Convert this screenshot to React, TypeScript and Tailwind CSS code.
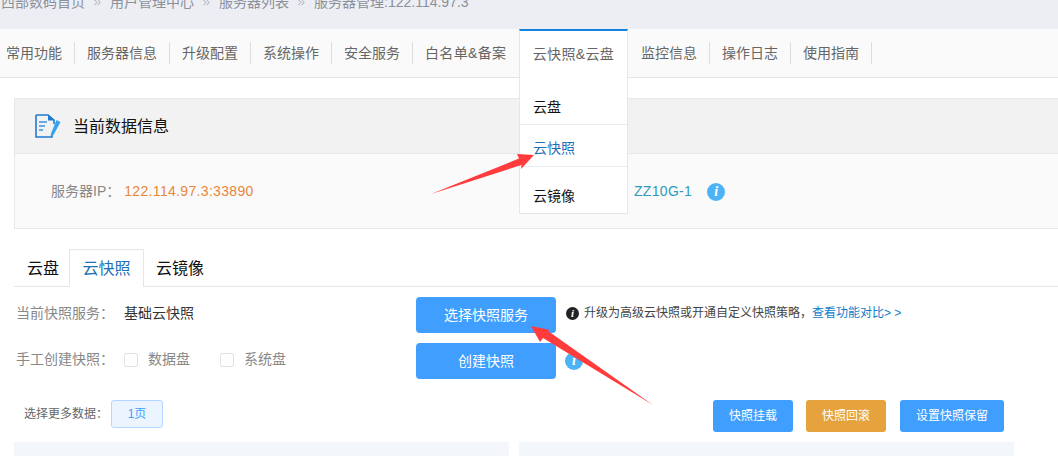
import React from 'react';
import { ChevronsRight } from 'lucide-react';

const font = "font-['Liberation_Sans','Noto_Sans_CJK_SC',sans-serif]";

const navItems = ['服务器信息', '升级配置', '系统操作', '安全服务'];
const navAfter = ['监控信息', '操作日志', '使用指南'];
const crumbs = ['用户管理中心', '服务器列表', '服务器管理:122.114.97.3'];

const InfoDot = ({ className }: { className: string }) => (
  <span className={`flex items-center justify-center rounded-full font-['Liberation_Serif',serif] font-bold italic leading-none ${className}`}>i</span>
);

const DocIcon = () => (
  <svg width="26" height="24" viewBox="0 0 26 24" fill="none">
    <path d="M1 1H13L19 6V10M17 21V23H1V1" stroke="#1f7ad0" strokeWidth="1.6" />
    <path d="M13 0.5L19.5 6.5H13Z" fill="#1f7ad0" />
    <path d="M4 8H12M4 12H10M4 16H8" stroke="#3f93dd" strokeWidth="1.6" />
    <path d="M21.5 6L25.5 8L18.5 21L15.5 23L16 19.5Z" fill="#35a3ee" />
  </svg>
);

const Checkbox = () => <span className="w-[14px] h-[14px] border border-[#dcdfe6] rounded-[2px] bg-white" />;

export default function App() {
  return (
    <div className={`relative w-[1058px] h-[456px] overflow-hidden bg-white text-[14px] ${font}`}>
      {/* breadcrumb, cut off by the top of the window */}
      <div className="h-[29px] bg-[#eceef4] overflow-hidden">
        <div className="flex items-center -mt-[8px] pl-[1px] h-[21px] text-[#8b9099]">
          <span>西部数码首页</span>
          {crumbs.map(c => (
            <React.Fragment key={c}>
              <ChevronsRight size={11} className="mx-[7px] text-[#9aa0aa]" />
              <span>{c}</span>
            </React.Fragment>
          ))}
        </div>
      </div>

      {/* nav */}
      <div className="flex h-[49px] bg-[#fafafa] border-b border-[#e6e6e6] text-[#666]">
        <div className="self-center h-[22px] leading-[22px] pl-[6px] pr-3 border-r border-[#ddd]">常用功能</div>
        {navItems.map(n => (
          <div key={n} className="self-center h-[22px] leading-[22px] px-3 border-r border-[#ddd]">{n}</div>
        ))}
        <div className="self-center h-[22px] leading-[22px] pl-3 w-[106px] tracking-[0.35px]">白名单&amp;备案</div>
        <div className="w-[109px] h-[49px] bg-white border-x border-[#e6e6e6] border-t-2 border-t-[#1581e0] flex items-center justify-center tracking-[0.35px]">云快照&amp;云盘</div>
        <div className="flex self-center ml-[1px]">
          {navAfter.map(n => (
            <div key={n} className="h-[22px] leading-[22px] px-3 border-r border-[#ddd]">{n}</div>
          ))}
        </div>
      </div>

      {/* current data panel */}
      <div className="ml-[14px] mt-[20px] border border-[#e8e8e8] border-r-0 bg-[#fafafa] h-[131px]">
        <div className="h-[55px] bg-[#f2f2f2] border-b border-[#e8e8e8] flex items-center pl-[20px] gap-[12px] text-[16px] text-[#111]">
          <DocIcon />
          <span className="pt-[2px]">当前数据信息</span>
        </div>
        <div className="h-[75px] flex items-center pl-[36px]">
          <div className="w-[583px] text-[#888]">
            服务器IP：<span className="ml-[4px] tracking-[0.33px] text-[#e8873a]">122.114.97.3:33890</span>
          </div>
          <span className="tracking-[0.3px] text-[#2f9bbd]">ZZ10G-1</span>
          <InfoDot className="ml-[15px] w-[18px] h-[18px] bg-[#4db3f7] text-white text-[14px]" />
        </div>
      </div>

      {/* tabs */}
      <div className="ml-[14px] mt-[20px] h-[38px] flex border-b border-[#e6e6e6] text-[16px] text-[#111]">
        <div className="w-[55px] pl-[13px] pt-[1px] leading-[38px]">云盘</div>
        <div className="w-[75px] h-[38px] bg-white border border-b-0 border-[#e6e6e6] text-center pt-[1px] leading-[36px] text-[#1f6fb5]">云快照</div>
        <div className="pl-[12px] pt-[1px] leading-[38px]">云镜像</div>
      </div>

      {/* snapshot rows */}
      <div className="pl-[16px] pt-[10px] text-[#888]">
        <div className="flex items-center h-[36px]">
          <span className="w-[108px] mb-[4px]">当前快照服务：</span>
          <span className="w-[292px] mb-[4px] text-[#333]">基础云快照</span>
          <button className="w-[140px] h-[36px] rounded-[4px] bg-[#409eff] text-white">选择快照服务</button>
          <InfoDot className="ml-[10px] mb-[4px] w-[13px] h-[13px] bg-[#222] text-white text-[11px]" />
          <span className="ml-[5px] mb-[4px] text-[12px] text-[#444]">升级为高级云快照或开通自定义快照策略，</span>
          <span className="mb-[4px] text-[12px] text-[#0f7bc9]">查看功能对比&gt; &gt;</span>
        </div>
        <div className="flex items-center h-[36px] mt-[10px]">
          <span className="w-[108px] mb-[4px]">手工创建快照：</span>
          <span className="w-[292px] mb-[3px] flex items-center">
            <Checkbox />
            <span className="ml-[10px] mr-[30px]">数据盘</span>
            <Checkbox />
            <span className="ml-[10px]">系统盘</span>
          </span>
          <button className="w-[140px] h-[36px] rounded-[4px] bg-[#409eff] text-white">创建快照</button>
          <InfoDot className="ml-[9px] w-[18px] h-[18px] bg-[#4db3f7] text-white text-[14px]" />
        </div>
      </div>

      {/* toolbar */}
      <div className="flex items-start h-[32px] mt-[21px] pl-[24px] text-[12px]">
        <span className="w-[87px] h-[28px] leading-[28px] text-[#666]">选择更多数据：</span>
        <span className="w-[52px] h-[28px] leading-[26px] text-center border border-[#b3d8ff] bg-[#ecf5ff] rounded-[3px] text-[#409eff]">1页</span>
        <button className="ml-[550px] w-[80px] h-[32px] rounded-[3px] bg-[#409eff] text-white">快照挂载</button>
        <button className="ml-[13px] w-[80px] h-[32px] rounded-[3px] bg-[#e6a23c] text-white">快照回滚</button>
        <button className="ml-[14px] w-[104px] h-[32px] rounded-[3px] bg-[#409eff] text-white">设置快照保留</button>
      </div>

      {/* table headers, cut off */}
      <div className="flex gap-[10px] ml-[14px] mt-[10px]">
        <div className="w-[495px] h-[14px] bg-[#f3f6fb]" />
        <div className="w-[495px] h-[14px] bg-[#f3f6fb]" />
      </div>

      {/* dropdown over the panel */}
      <div className="absolute left-[519px] top-[77px] w-[109px] h-[137px] bg-white border border-[#e6e6e6] border-t-0 text-[#111]">
        <div className="h-[48px] pl-[13px] pt-[19px] leading-[22px] border-b border-[#ebebeb]">云盘</div>
        <div className="h-[42px] pl-[13px] pt-[12px] leading-[22px] border-b border-[#ebebeb] text-[#1f6fb5]">云快照</div>
        <div className="pl-[13px] pt-[18px] leading-[22px]">云镜像</div>
      </div>

      {/* red annotation arrows */}
      <svg className="absolute left-0 top-0 pointer-events-none" width="1058" height="456" fill="#ff3b3b">
        <polygon points="431,194 519,158.5 517,154 534,155 521,169 521.5,165" />
        <polygon points="653,405 543,338 540,342 531,326 550,330 548,331" />
      </svg>
    </div>
  );
}
